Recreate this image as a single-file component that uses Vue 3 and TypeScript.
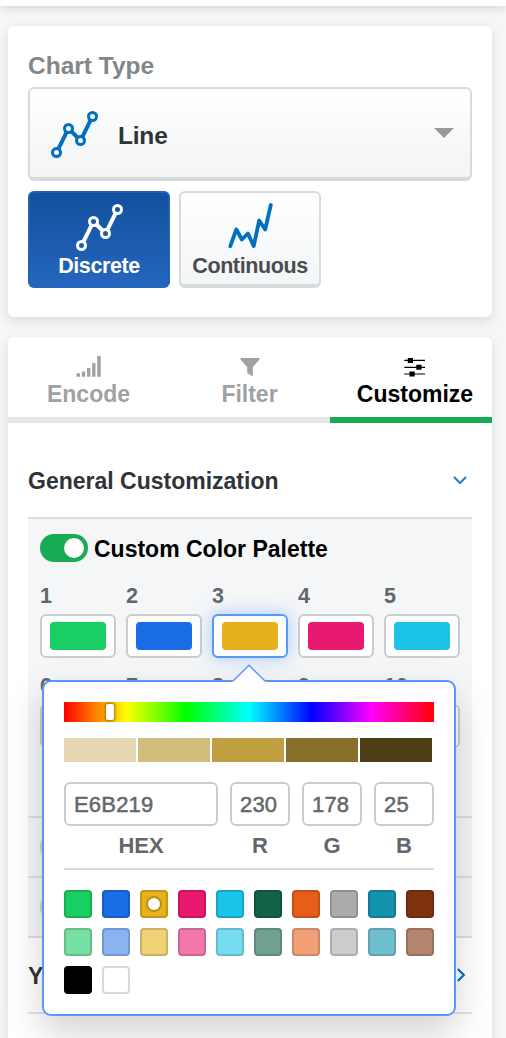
<script setup lang="ts">
import { ref } from 'vue'

interface Swatch {
  label: string
  color: string
}

const chartModes = ['Discrete', 'Continuous']
const activeMode = ref('Discrete')
const customPalette = ref(true)
const selected = ref('#e6b219')

const palette: Swatch[] = [
  { label: '1', color: '#19ce63' },
  { label: '2', color: '#1a6de5' },
  { label: '3', color: '#e4b11a' },
  { label: '4', color: '#e81a6f' },
  { label: '5', color: '#1ac3e7' },
  { label: '6', color: '#126247' },
  { label: '7', color: '#e65f1a' },
  { label: '8', color: '#ababab' },
  { label: '9', color: '#1393ad' },
  { label: '10', color: '#7e330f' },
]

const shades = ['#e6d8b5', '#d1bd79', '#bf9f3f', '#876f2b', '#4e3e18']

const channels = [
  { label: 'HEX', value: 'E6B219' },
  { label: 'R', value: '230' },
  { label: 'G', value: '178' },
  { label: 'B', value: '25' },
]

const presets = [
  '#19ce63', '#1a6de5', '#e6b219', '#e81a6f', '#1ac3e7', '#126247', '#e65f1a', '#ababab', '#1393ad', '#7e330f',
  '#76e1a2', '#8bb2f1', '#efd176', '#f176a9', '#76dcf0', '#70a190', '#f09f77', '#cccccc', '#71bfce', '#b3856f',
  '#000000', '#ffffff',
]
</script>

<template>
  <div class="page">
    <div class="topbar"></div>

    <section class="card chart-card">
      <h2 class="title">Chart Type</h2>
      <button class="select">
        <svg class="select-icon" width="49" height="49" viewBox="0 0 49 49" fill="none" stroke="#0070c0" stroke-width="3">
          <path d="M8.500 38.700 16.500 22.300M21.500 21.500l6 6M32.500 26.700 40.500 10.300" stroke-width="4" />
          <circle cx="6.500" cy="42.500" r="4" /><circle cx="18.500" cy="18.500" r="4" />
          <circle cx="30.500" cy="30.500" r="4" /><circle cx="42.500" cy="6.500" r="4" />
        </svg>
        <span class="select-text">Line</span>
        <span class="caret"></span>
      </button>
      <div class="modes">
        <button
          v-for="mode in chartModes"
          :key="mode"
          class="mode"
          :class="{ active: mode === activeMode }"
          @click="activeMode = mode"
        >
          <svg v-if="mode === 'Discrete'" width="48" height="48" viewBox="0 0 48 48" fill="none" stroke="currentColor" stroke-width="3">
            <path d="M8.500 38.700 16.500 22.300M21.500 21.500l6 6M32.500 26.700 40.500 10.300" stroke-width="4" />
            <circle cx="6.500" cy="42.500" r="4" /><circle cx="18.500" cy="18.500" r="4" />
            <circle cx="30.500" cy="30.500" r="4" /><circle cx="42.500" cy="6.500" r="4" />
          </svg>
          <svg v-else width="48" height="48" viewBox="0 0 48 48" fill="none" stroke="#0070c0" stroke-width="3.800">
            <path d="M4.300 43.200 10.300 26.500l5.600 10 6-6L27.700 43l5.500-25.500 6 9L44.800 2" stroke-linejoin="round" stroke-linecap="round" />
          </svg>
          <span>{{ mode }}</span>
        </button>
      </div>
    </section>

    <section class="card config-card">
      <nav class="tabs">
        <a class="tab">
          <svg width="26" height="22" viewBox="0 0 26 22" fill="currentColor">
            <path d="M.500 17.200h3.500v3.500H.500zM5.800 15.500h3.400v5.200H5.800zM11 12h3.400v8.700h-3.400zM16.100 7h3.400v13.700h-3.400zM21.200 0h3.500v20.700h-3.500z" />
          </svg>
          <span>Encode</span>
        </a>
        <a class="tab">
          <svg width="26" height="22" viewBox="0 0 26 22" fill="currentColor">
            <path d="M3.500 2h19v1.500L15.800 11v9.500L10.200 17v-6L3.500 3.500z" />
          </svg>
          <span>Filter</span>
        </a>
        <a class="tab active">
          <svg width="26" height="22" viewBox="0 0 26 22" fill="currentColor">
            <path d="M2.300 3.800h20.700v1.200h-20.700zM2.300 10.700h20.700v1.200h-20.700zM2.300 17.400h20.700v1.200h-20.700z" />
            <path d="M5.800 1.900h5.200v5H5.800zM14.300 8.800h5.200v5h-5.200zM7.500 15.500h5.200v5H7.500z" />
          </svg>
          <span>Customize</span>
        </a>
      </nav>

      <div class="accordion">
        <header class="section-head general">
          <span>General Customization</span>
          <svg width="16" height="12" viewBox="0 0 16 12" fill="none" stroke="#2583cb" stroke-width="2.200">
            <path d="M2 2 8 8l6-6" />
          </svg>
        </header>

        <div class="panel">
          <div class="toggle-row">
            <span class="toggle" :class="{ on: customPalette }"></span>
            <span class="toggle-text">Custom Color Palette</span>
          </div>
          <div class="palette">
            <div v-for="(item, i) in palette" :key="item.label" class="field">
              <span class="field-label">{{ item.label }}</span>
              <span class="well" :class="{ focused: i === 2 }">
                <span class="well-fill" :style="{ background: item.color }"></span>
              </span>
            </div>
          </div>
          <div class="option-row"><span class="toggle"></span></div>
          <div class="option-row"><span class="toggle"></span></div>

          <div class="popover">
            <svg class="arrow" width="36" height="20" viewBox="0 0 36 20">
              <path d="M1 20v-1.500L18 2l17 16.500V20z" fill="#fff" />
              <path d="M1.500 18.500 18 2.300l16.500 16.200" fill="none" stroke="#5897fb" stroke-width="1.500" />
            </svg>
            <div class="hue"><span class="hue-handle"></span></div>
            <div class="shades">
              <span v-for="shade in shades" :key="shade" :style="{ background: shade }"></span>
            </div>
            <div class="channels">
              <label v-for="channel in channels" :key="channel.label" class="channel">
                <span class="value">{{ channel.value }}</span>
                <span class="channel-label">{{ channel.label }}</span>
              </label>
            </div>
            <div class="presets">
              <span
                v-for="color in presets"
                :key="color"
                class="preset"
                :class="{ picked: color === selected }"
                :style="{ background: color }"
                @click="selected = color"
              ></span>
            </div>
          </div>
        </div>

        <header class="section-head axis">
          <span class="axis-text">Y</span>
          <svg width="12" height="16" viewBox="0 0 12 16" fill="none" stroke="#0b70bf" stroke-width="2.200">
            <path d="M2.800 2 8.800 8l-6 6" />
          </svg>
        </header>
      </div>
    </section>
  </div>
</template>

<style>
body {
  margin: 0;
}
</style>

<style scoped>
* {
  box-sizing: border-box;
}
.page {
  height: 1038px;
  overflow: hidden;
  background: #f4f6f8;
  font-family: 'Liberation Sans', Arial, sans-serif;
  font-weight: 700;
  font-size: 23px;
}
button {
  font: inherit;
  margin: 0;
  padding: 0;
}
svg {
  display: block;
  flex: none;
}
.topbar {
  height: 6px;
  margin-bottom: 20px;
  background: #fff;
  box-shadow: 0 1px 10px rgba(0, 0, 0, 0.2);
}
.card {
  width: 484px;
  margin-left: 8px;
  background: #fff;
  border-radius: 6px;
  box-shadow: 0 4px 12px rgba(0, 0, 0, 0.11);
}
.chart-card {
  height: 291px;
  margin-bottom: 20px;
  padding: 20px;
}
.title {
  margin: 0 0 1px;
  font-size: 24.500px;
  line-height: 40px;
  color: #83878a;
}
.select {
  display: flex;
  align-items: center;
  width: 444px;
  height: 94px;
  padding: 0 16px 0 20px;
  border: 2px solid #d6dbdb;
  border-bottom-width: 4px;
  border-radius: 6px;
  background: linear-gradient(#fff, #f7f8f8 60%, #f3f5f7);
  font-size: 24.500px;
  letter-spacing: -0.200px;
  color: #303436;
}
.select-icon {
  margin-top: 3px;
}
.select-text {
  padding-top: 6px;
  margin-left: 19px;
}
.caret {
  margin-left: auto;
  border: 10px solid transparent;
  border-top-color: #999;
  border-bottom-width: 0;
}
.modes {
  display: flex;
  gap: 9px;
  margin-top: 10px;
}
.mode {
  display: flex;
  flex-direction: column;
  align-items: center;
  width: 142px;
  height: 97px;
  padding-top: 10px;
  border: 2px solid #d6dbdb;
  border-bottom-width: 4px;
  border-radius: 6px;
  background: linear-gradient(#fff, #f3f5f7);
  color: #484d50;
  font-size: 21.500px;
  letter-spacing: -0.400px;
}
.mode span {
  margin-top: 2px;
  line-height: 26px;
  white-space: nowrap;
}
.mode.active {
  border-color: #2061b6;
  border-bottom-color: #2366bd;
  background: linear-gradient(#13509d, #2366bd);
  color: #fff;
}
.config-card {
  height: 760px;
}
.tabs {
  display: flex;
  height: 86px;
}
.tab {
  display: flex;
  flex-direction: column;
  align-items: center;
  flex: 1;
  padding-top: 19px;
  border-bottom: 6px solid #e6e8e8;
  color: #a0a1a3;
  white-space: nowrap;
}
.tab span {
  line-height: 28px;
  margin-top: 2px;
}
.tab.active {
  flex: 0 0 162px;
  padding-left: 8px;
  border-color: #17ab54;
  color: #000;
}
.accordion {
  padding: 0 20px;
}
.section-head {
  display: flex;
  justify-content: space-between;
  align-items: center;
  color: #303436;
}
.general {
  height: 96px;
  padding: 22px 4px 0 0;
  border-bottom: 2px solid #dbdee0;
}
.axis {
  height: 76px;
  padding-right: 5px;
  border-bottom: 2px solid #e2e4e4;
}
.axis-text {
  padding-top: 2px;
}
.panel {
  position: relative;
  height: 419px;
  background: #f4f6f8;
}
.toggle-row {
  display: flex;
  align-items: center;
  gap: 6px;
  height: 58px;
  padding-left: 12px;
  color: #000;
}
.toggle-text {
  padding-top: 2px;
}
.toggle {
  width: 48px;
  height: 28px;
  padding: 4px;
  border-radius: 14px;
  background: #cfd2d3;
}
.toggle::after {
  content: '';
  display: block;
  width: 20px;
  height: 20px;
  border-radius: 50%;
  background: #fff;
}
.toggle.on {
  background: #17ab54;
}
.toggle.on::after {
  margin-left: 20px;
}
.palette {
  display: grid;
  grid-template-columns: repeat(5, 76px);
  gap: 10px;
  height: 239px;
  align-content: start;
  padding: 7px 12px 0;
}
.field {
  height: 80px;
}
.field-label {
  display: block;
  height: 30px;
  line-height: 24px;
  font-size: 21.500px;
  color: #636769;
}
.well {
  display: block;
  height: 44px;
  padding: 6px 8px;
  border: 2px solid #ccc;
  border-radius: 6px;
  background: #fff;
}
.well.focused {
  border-color: #5897fb;
  box-shadow: 0 0 16px rgba(88, 151, 251, 0.5);
}
.well-fill {
  display: block;
  height: 28px;
  border-radius: 4px;
}
.option-row {
  display: flex;
  align-items: center;
  height: 60px;
  padding-left: 12px;
  border-top: 2px solid #dbdee0;
}
.option-row + .option-row {
  height: 62px;
  border-bottom: 2px solid #dbdee0;
}
.popover {
  position: absolute;
  z-index: 2;
  left: 14px;
  top: 161px;
  width: 414px;
  height: 336px;
  padding: 20px;
  border: 2px solid #5897fb;
  border-radius: 9px;
  background: #fff;
  box-shadow: 0 16px 36px rgba(0, 0, 0, 0.18);
}
.arrow {
  position: absolute;
  left: 187px;
  top: -19px;
}
.hue {
  position: relative;
  height: 20px;
  background: linear-gradient(90deg, #f00, #ff0 17%, #0f0 33%, #0ff 50%, #00f 67%, #f0f 83%, #f00);
}
.hue-handle {
  position: absolute;
  left: 42px;
  top: 2px;
  width: 8px;
  height: 16px;
  border-radius: 2px;
  background: #fff;
  box-shadow: 0 0 3px 1px rgba(90, 60, 0, 0.6);
}
.shades {
  display: grid;
  grid-template-columns: repeat(5, 72px);
  gap: 2px;
  height: 24px;
  margin-top: 16px;
}
.channels {
  display: grid;
  grid-template-columns: 154px 60px 60px 60px;
  gap: 12px;
  height: 88px;
  margin-top: 20px;
  border-bottom: 2px solid #d6dbdb;
}
.channel {
  color: #63676b;
  font-size: 22px;
  text-align: center;
}
.value {
  display: block;
  height: 44px;
  padding-left: 8px;
  border: 2px solid #ccc;
  border-radius: 6px;
  line-height: 41px;
  font-weight: 400;
  text-align: left;
  letter-spacing: 0.200px;
  -webkit-text-stroke: 0.500px #63676b;
}
.channel-label {
  display: block;
  line-height: 39px;
}
.presets {
  display: grid;
  grid-template-columns: repeat(10, 28px);
  gap: 10px;
  margin-top: 20px;
}
.preset {
  display: flex;
  align-items: center;
  justify-content: center;
  height: 28px;
  border: 2px solid rgba(0, 0, 0, 0.15);
  border-radius: 4px;
}
.preset.picked::after {
  content: '';
  width: 12px;
  height: 12px;
  border-radius: 50%;
  background: #fff;
  box-shadow: 0 0 0 2px #b98f16;
}
</style>
